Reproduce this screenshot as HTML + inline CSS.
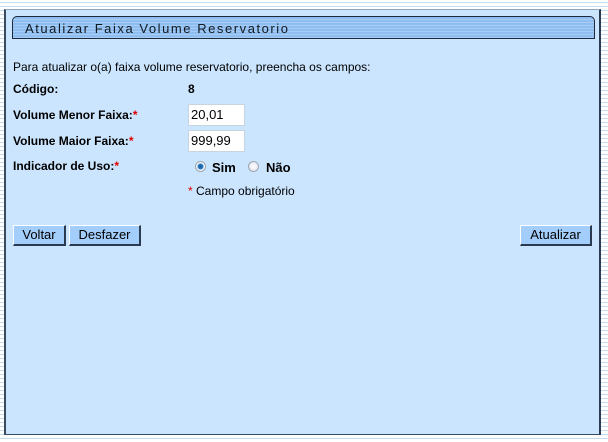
<!DOCTYPE html>
<html><head><meta charset="utf-8"><style>
html,body{margin:0;padding:0;width:608px;height:442px;overflow:hidden;
background:repeating-linear-gradient(to bottom,#fff 0,#fff 2px,#c5dcef 2px,#c5dcef 3px,#fff 3px,#fff 4px);
font-family:"Liberation Sans",Arial,sans-serif;font-size:12px;color:#000}
.panel{position:absolute;left:4px;top:9px;width:593px;height:424px;background:#cbe5fe;border:1px solid #3a4a60;border-left:2px solid #3a4a60;border-right:2px solid #2a3a50;border-top:1px solid #8fa8c0}
.title{position:absolute;left:6px;top:6px;height:23px;border:1px solid #1e2a3a;border-radius:5px 5px 0 0;
background:repeating-linear-gradient(to bottom,#8fbdf0 0,#8fbdf0 2px,#a6cdf6 2px,#a6cdf6 3px);
font-size:13px;letter-spacing:1.55px;line-height:23px;padding-left:12px;box-sizing:border-box;width:583px;color:#101820}
.t{position:absolute;white-space:nowrap}
.b{font-weight:bold}
.r{color:#e00000}
.inp{position:absolute;width:57px;height:22px;background:#fff;border:1px solid #c8d4de;box-sizing:border-box;font-size:13px;line-height:20px;padding-left:2px}
.btn{position:absolute;top:215px;height:21px;background:#a3cdfb;border:1px solid #fff;border-right:2px solid #2a3a50;border-bottom:2px solid #2a3a50;box-sizing:border-box;font-size:13px;line-height:18px;text-align:center}
.rad{position:absolute;width:11px;height:11px;border-radius:50%;border:1px solid #9aa6b0;background:radial-gradient(circle,#fff,#dde);box-sizing:border-box}
</style></head><body>
<div class="panel">
<div class="title">Atualizar Faixa Volume Reservatorio</div>
<div class="t" style="left:7px;top:50px">Para atualizar o(a) faixa volume reservatorio, preencha os campos:</div>
<div class="t b" style="left:7px;top:72px">Código:</div>
<div class="t b" style="left:182px;top:72px">8</div>
<div class="t b" style="left:7px;top:98px">Volume Menor Faixa:<span class="r">*</span></div>
<div class="inp" style="left:182px;top:94px">20,01</div>
<div class="t b" style="left:7px;top:124px">Volume Maior Faixa:<span class="r">*</span></div>
<div class="inp" style="left:182px;top:120px">999,99</div>
<div class="t b" style="left:7px;top:149px">Indicador de Uso:<span class="r">*</span></div>
<div class="rad" style="left:189px;top:151px;background:radial-gradient(circle,#1a5a9a 0,#2a7ac0 2.5px,#fff 3.5px,#dde 6px)"></div>
<div class="t b" style="left:206px;top:150px;font-size:13px">Sim</div>
<div class="rad" style="left:242px;top:151px"></div>
<div class="t b" style="left:260px;top:150px;font-size:13px">Não</div>
<div class="t" style="left:182px;top:174px"><span class="r">*</span> Campo obrigatório</div>
<div class="btn" style="left:7px;width:53px">Voltar</div>
<div class="btn" style="left:63px;width:72px">Desfazer</div>
<div class="btn" style="left:514px;width:72px">Atualizar</div>
</div>
</body></html>
